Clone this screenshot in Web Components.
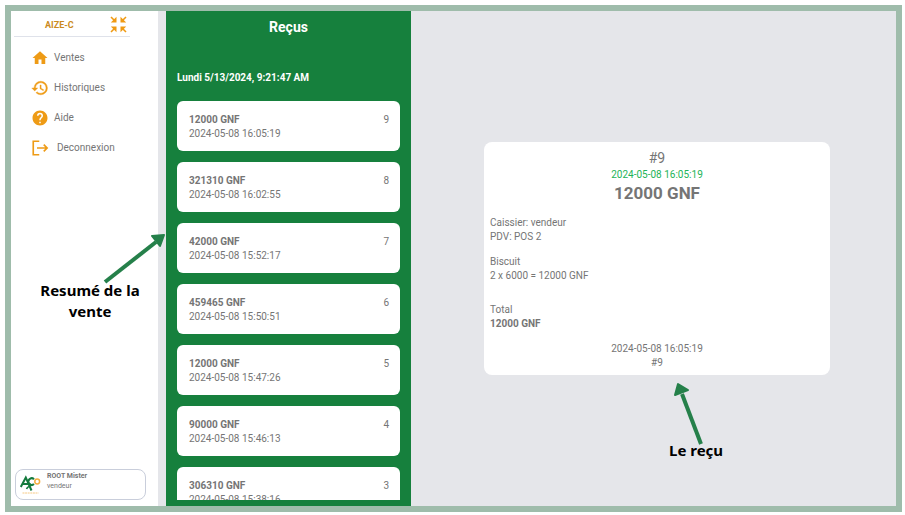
<!DOCTYPE html>
<html lang="fr">
<head>
<meta charset="utf-8">
<title>AIZE-C – Reçus</title>
<style>
  html, body { height: 100%; margin: 0; }
  body { background: #fff; font: 10px/14px Roboto, "Liberation Sans", sans-serif; color: #757575; }
</style>
</head>
<body>
<pos-app></pos-app>
<script>
const define = (name, html, setup) => customElements.define(name, class extends HTMLElement {
  constructor() {
    super();
    const root = this.attachShadow({ mode: 'open' });
    const t = document.createElement('template');
    t.innerHTML = '<style>*{box-sizing:border-box}p,h1,h2,ul{margin:0;padding:0}svg{display:block}</style>' + html;
    root.append(t.content.cloneNode(true));
  }
  connectedCallback() { if (setup) setup(this, this.shadowRoot); }
});

const icons = {
  home: '<path d="M10 20v-6h4v6h5v-8h3L12 3 2 12h3v8z"/>',
  history: '<path stroke="currentColor" stroke-width=".5" d="M13 3a9 9 0 0 0-9 9H1l3.890 3.890.07.14L9 12H6c0-3.870 3.130-7 7-7s7 3.130 7 7-3.130 7-7 7c-1.930 0-3.680-.79-4.940-2.060l-1.420 1.420A8.950 8.950 0 0 0 13 21a9 9 0 0 0 0-18zm-1 5v5l4.280 2.540.72-1.210-3.500-2.080V8z"/>',
  help: '<path d="M12 2C6.480 2 2 6.480 2 12s4.480 10 10 10 10-4.480 10-10S17.520 2 12 2zm1 17h-2v-2h2v2zm2.070-7.750-.9.92C13.450 12.900 13 13.500 13 15h-2v-.5c0-1.100.45-2.100 1.170-2.830l1.240-1.260c.37-.36.59-.86.59-1.410a2 2 0 0 0-4 0H8a4 4 0 0 1 8 0c0 .88-.36 1.680-.93 2.250z"/>',
  logout: '<path fill="none" stroke="currentColor" stroke-width="2.200" d="M11 3H3v18h8M8 12h13M17 7.500l4.500 4.500-4.500 4.500"/>'
};

define('nav-item', `
<style>
  :host { display: block; }
  a { display: flex; align-items: center; gap: 5px; height: 30px; color: inherit; text-decoration: none; }
  svg { width: 18px; height: 18px; color: #ee9b16; fill: currentColor; flex: none; }
  :host([icon=logout]) a { gap: 8px; }
</style>
<a href="#"><svg viewBox="0 0 24 24" aria-hidden="true"></svg><span><slot></slot></span></a>`,
(el, r) => { r.querySelector('svg').innerHTML = icons[el.getAttribute('icon')]; });

define('user-card', `
<style>
  :host { display: flex; align-items: flex-start; gap: 6px; min-height: 31px; padding: 1px 4px; border: 1px solid #c9cedb; border-radius: 8px; font-size: 7px; line-height: 10px; }
  svg { width: 21px; height: 21px; margin-top: 3px; flex: none; }
  p:first-child { font-weight: 700; }
</style>
<svg viewBox="0 0 21 21" fill="none" aria-hidden="true">
  <path d="M.8 13 5.800 3.500 11.500 16.500M2.500 10h8" stroke="#147a3d" stroke-width="2"/>
  <path d="M14 5.200A3.300 3.300 0 1 0 14 10" stroke="#147a3d" stroke-width="2"/>
  <circle cx="17.200" cy="7.500" r="2.400" stroke="#f3ad3f" stroke-width="1.500"/>
  <path d="M11.500 11c-2 1-4.500 2-5 4" stroke="#147a3d" stroke-width="1.500"/>
  <path d="M2.500 19h16" stroke="#f6c983" stroke-width="1" stroke-dasharray="2 .6"/>
</svg>
<div><p><slot name="name"></slot></p><p><slot></slot></p></div>`);

define('call-out', `
<style>
  :host { position: absolute; color: #000; font: 700 15px/21px "Noto Sans", "Open Sans", sans-serif; text-align: center; pointer-events: none; }
  svg { overflow: visible; position: absolute; color: #25804a; }
  line { stroke: currentColor; stroke-width: 4; }
  polygon { fill: currentColor; stroke: currentColor; stroke-width: 2; stroke-linejoin: round; }
  .up, .right { display: none; }
  :host([to=up]) .up { display: block; left: 5px; bottom: 16px; }
  :host([to=right]) .right { display: block; right: -20px; bottom: 39px; }
</style>
<svg class="right" width="62" height="50" viewBox="0 0 62 50" aria-hidden="true"><line x1="2" y1="49" x2="53" y2="9"/><polygon points="61,2 49,3 57,13"/></svg>
<svg class="up" width="30" height="62" viewBox="0 0 30 62" aria-hidden="true"><line x1="27" y1="61" x2="8" y2="11"/><polygon points="4,1 1,12 14,7"/></svg>
<slot></slot>`);

define('side-bar', `
<style>
  :host { position: relative; display: flex; flex-direction: column; background: #fff; padding: 0 12px 6px 4px; }
  header { display: flex; align-items: center; justify-content: space-between; width: 116px; height: 26px; margin-left: -1px; padding: 2px 3px 0 31px; border-bottom: 1px solid #dfe2ea; }
  h1 { font-size: 9px; line-height: 12px; color: #cb8b1d; }
  button { border: 0; background: none; padding: 0; color: #f09a12; }
  nav { padding: 6px 0 0 16px; flex: 1; }
  call-out { top: 269px; right: 13px; width: 110px; }
</style>
<header><h1>AIZE-C</h1>
  <button aria-label="Réduire"><svg width="17" height="17" viewBox="0 0 17 17" fill="currentColor" stroke="currentColor" stroke-width="1.600">
    <path stroke="none" d="M6.500.8v5.700H.8zM10.500.8v5.700h5.700zM6.500 16.200v-5.700H.8zM10.500 16.200v-5.700h5.700z"/>
    <path d="M1 1l4 4M16 1l-4 4M1 16l4-4M16 16l-4-4"/></svg></button>
</header>
<nav>
  <nav-item icon="home">Ventes</nav-item>
  <nav-item icon="history">Historiques</nav-item>
  <nav-item icon="help">Aide</nav-item>
  <nav-item icon="logout">Deconnexion</nav-item>
</nav>
<user-card><span slot="name">ROOT Mister</span>vendeur</user-card>
<call-out to="right">Resumé de la vente</call-out>`);

define('sale-card', `
<style>
  :host { display: block; }
  button { display: flex; justify-content: space-between; width: 100%; height: 50px; padding: 12px 11px 0 12px; align-items: flex-start; background: #fff; border: 0; border-radius: 6px; font: inherit; color: inherit; text-align: left; }
  b, .date { display: block; }
</style>
<button><span><b><slot></slot></b><span class="date"></span></span><span class="n"></span></button>`,
(el, r) => { r.querySelector('.date').textContent = el.getAttribute('date'); r.querySelector('.n').textContent = el.getAttribute('number'); });

define('sale-list', `
<style>
  :host { display: flex; flex-direction: column; min-height: 0; background: #16803d; padding: 6px 11px; }
  h2 { font-size: 14px; line-height: 20px; color: #fff; text-align: center; }
  .now { font-weight: 700; color: #fff; margin: 34px 0 16px; }
  .list { display: flex; flex-direction: column; gap: 11px; flex: 1; min-height: 0; overflow: hidden; }
</style>
<h2>Reçus</h2>
<p class="now">Lundi 5/13/2024, 9:21:47 AM</p>
<div class="list">
  <sale-card number="9" date="2024-05-08 16:05:19">12000 GNF</sale-card>
  <sale-card number="8" date="2024-05-08 16:02:55">321310 GNF</sale-card>
  <sale-card number="7" date="2024-05-08 15:52:17">42000 GNF</sale-card>
  <sale-card number="6" date="2024-05-08 15:50:51">459465 GNF</sale-card>
  <sale-card number="5" date="2024-05-08 15:47:26">12000 GNF</sale-card>
  <sale-card number="4" date="2024-05-08 15:46:13">90000 GNF</sale-card>
  <sale-card number="3" date="2024-05-08 15:38:16">306310 GNF</sale-card>
</div>`);

define('receipt-card', `
<style>
  :host { display: block; position: relative; background: #fff; border-radius: 8px; padding: 6px 6px 5px; }
  .c { text-align: center; }
  .id { font-size: 14px; line-height: 20px; }
  .date { color: #22b357; }
  .amount { font-size: 17px; line-height: 23px; font-weight: 700; }
  section { margin-top: 11px; }
  .total { margin-top: 20px; }
  call-out { top: calc(100% + 65px); left: 50%; margin-left: 12px; white-space: nowrap; }
</style>
<div class="c"><p class="id">#9</p><p class="date">2024-05-08 16:05:19</p><p class="amount">12000 GNF</p></div>
<section><p>Caissier: vendeur</p><p>PDV: POS 2</p></section>
<section><p>Biscuit</p><p>2 x 6000 = 12000 GNF</p></section>
<section class="total"><p>Total</p><p><b>12000 GNF</b></p></section>
<section class="c"><p>2024-05-08 16:05:19</p><p>#9</p></section>
<call-out to="up">Le reçu</call-out>`);

define('pos-app', `
<style>
  :host { display: block; height: 100%; padding: 5px 3px 3px 5px; box-sizing: border-box; }
  main { display: grid; grid-template-columns: 147px 8px 245px minmax(0, 1fr); grid-template-rows: minmax(0, 1fr); height: 100%; border: 6px solid #9fbcab; background: #e5e6ea; }
  side-bar { grid-column: 1; z-index: 1; }
  sale-list { grid-column: 3; }
  .detail { display: flex; align-items: center; padding: 0 66px 0 73px; }
  receipt-card { flex: 1; }
</style>
<main><side-bar></side-bar><sale-list></sale-list><div class="detail"><receipt-card></receipt-card></div></main>`);
</script>
</body>
</html>
